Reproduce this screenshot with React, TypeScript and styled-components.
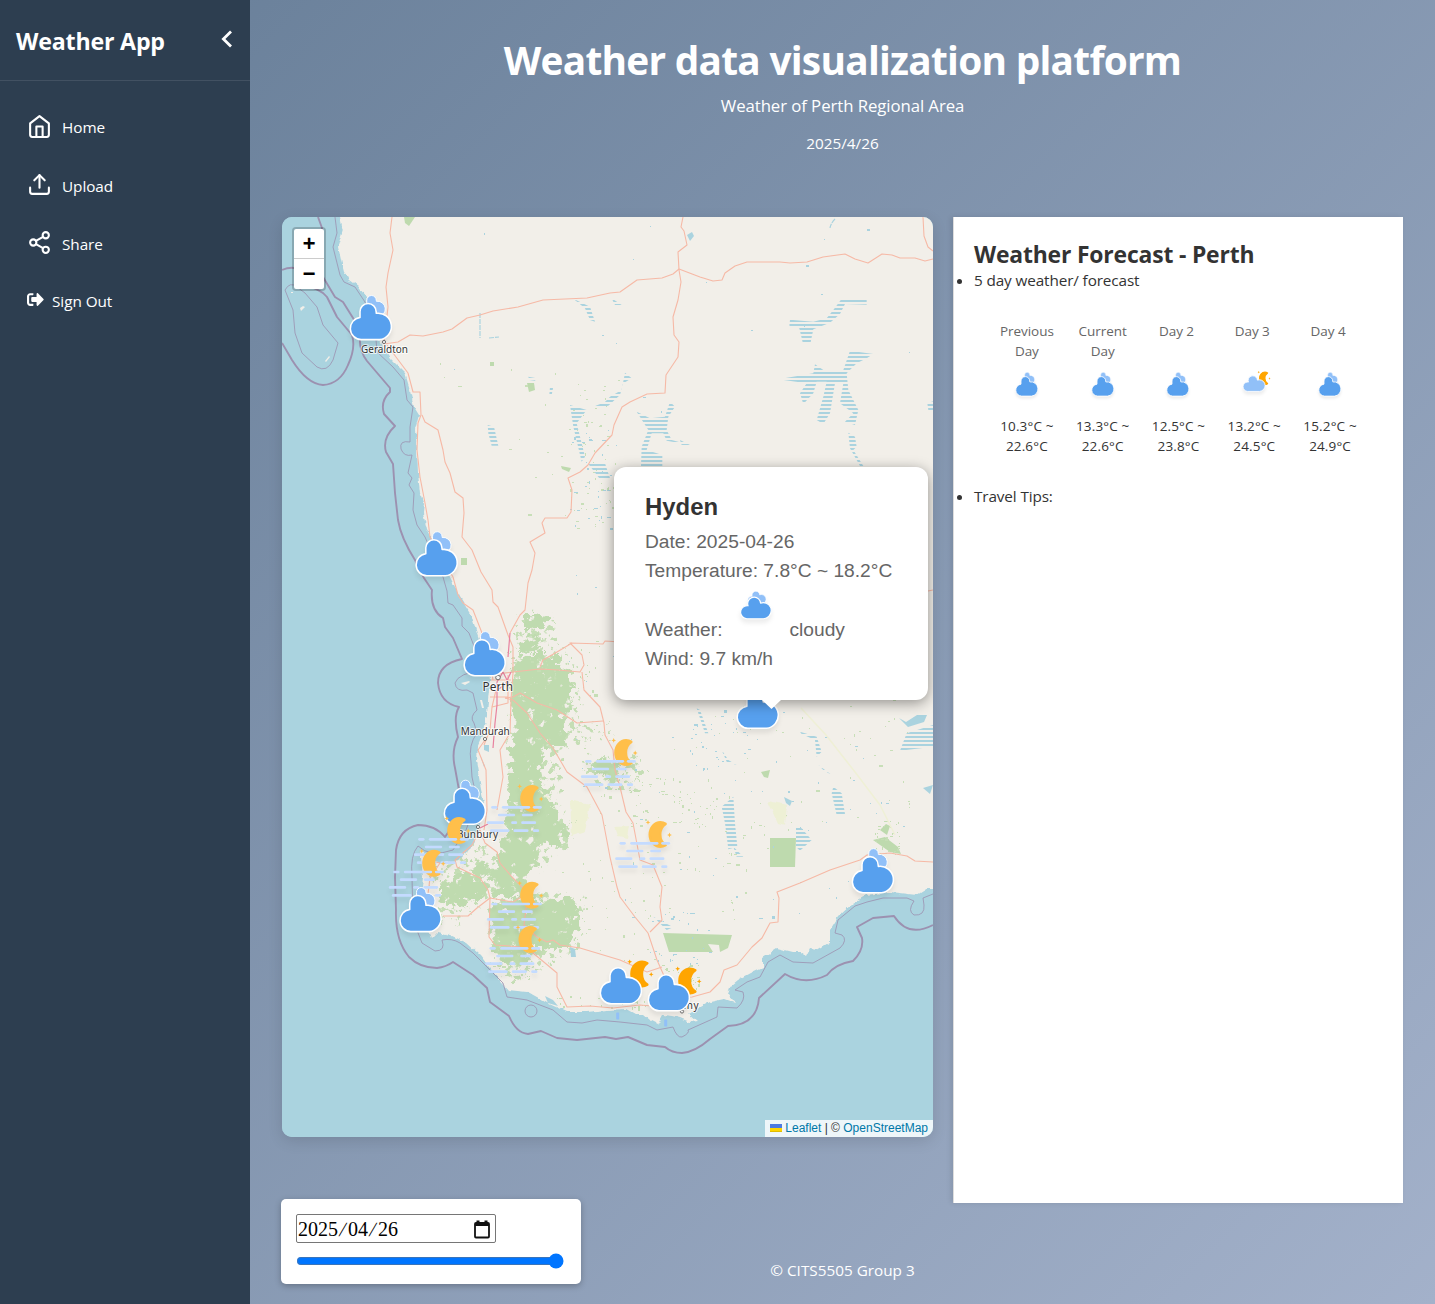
import React from "react";
import styled, { createGlobalStyle } from "styled-components";
import { FiHome, FiShare2, FiUpload } from "react-icons/fi";
import { FaSignOutAlt } from "react-icons/fa";

const uiFont = `"Segoe UI", "Open Sans", "Noto Sans", sans-serif`;
const mapFont = `"Liberation Sans", Arial, sans-serif`;

const GlobalStyle = createGlobalStyle`
  * { box-sizing: border-box; }
  body {
    margin: 0;
    font-family: ${uiFont};
    font-size: 15.3px;
    color: #333;
  }
  h1, h2, h3, p, ul { margin: 0; padding: 0; }
`;

const Page = styled.div`
  display: flex;
  height: 1304px;
  width: 1435px;
  overflow: hidden;
  background: linear-gradient(135deg, #667d97 0%, #a3b1ca 100%);
`;

const Sidebar = styled.aside`
  width: 250px;
  flex: none;
  background: #2d3e50;
  color: #fff;
`;

const SidebarHeader = styled.div`
  display: flex;
  align-items: center;
  justify-content: space-between;
  height: 81px;
  padding: 2px 17px 0 16px;
  border-bottom: 1px solid #425162;
`;

const Brand = styled.h2`
  font-size: 23.2px;
  font-weight: 700;
  line-height: 32px;
  letter-spacing: -0.2px;
  white-space: nowrap;
`;

const CollapseIcon = styled.svg`
  display: block;
  margin-top: -4px;
`;

const Nav = styled.nav`
  display: flex;
  flex-direction: column;
  padding-top: 17px;
`;

const NavItem = styled.a<{ $gap?: number; $height?: number }>`
  display: flex;
  align-items: center;
  gap: ${(p) => p.$gap ?? 10}px;
  height: ${(p) => p.$height ?? 58.4}px;
  padding-left: 27px;
  letter-spacing: -0.05px;
  svg {
    flex: none;
    margin-top: -2px;
  }
`;

const Main = styled.main`
  flex: 1;
  display: flex;
  flex-direction: column;
  padding: 0 32px;
`;

const Header = styled.header`
  display: flex;
  flex-direction: column;
  align-items: center;
  height: 217px;
  padding-top: 32px;
  color: #fff;
`;

const Title = styled.h1`
  font-size: 38.8px;
  font-weight: 700;
  line-height: 56px;
  letter-spacing: -0.73px;
  white-space: nowrap;
`;

const Subtitle = styled.p`
  margin-top: 6px;
  font-size: 16.8px;
  line-height: 24px;
  letter-spacing: -0.08px;
`;

const Today = styled.p`
  margin-top: 13px;
  font-size: 15.3px;
  line-height: 24px;
`;

const Content = styled.section`
  display: flex;
  gap: 20px;
  align-items: flex-start;
`;

const MapFrame = styled.div`
  position: relative;
  width: 651px;
  height: 920px;
  flex: none;
  border-radius: 10px;
  overflow: hidden;
  background: #aad3df;
`;

const MapShadow = styled.div`
  border-radius: 10px;
  box-shadow: 0 4px 15px rgba(0, 0, 0, 0.12);
`;

const MapSvg = styled.svg`
  display: block;
`;

const ZoomControl = styled.div`
  position: absolute;
  top: 10px;
  left: 10px;
  border: 2px solid rgba(0, 0, 0, 0.2);
  border-radius: 4px;
  background-clip: padding-box;
  background-color: #fff;
`;

const ZoomButton = styled.div<{ $divider?: boolean }>`
  width: 30px;
  height: 30px;
  padding-top: ${(p) => (p.$divider ? 5 : 3)}px;
  border-bottom: ${(p) => (p.$divider ? "1px solid #ccc" : "none")};
  display: flex;
  align-items: center;
  justify-content: center;
  color: #000;
  font: bold 22px/30px "Liberation Mono", "Courier New", monospace;
`;

const Attribution = styled.div`
  position: absolute;
  right: 0;
  bottom: 0;
  display: flex;
  align-items: center;
  height: 17px;
  padding: 0 5px;
  background: rgba(255, 255, 255, 0.8);
  color: #333;
  font: 12px/17px ${mapFont};
  white-space: pre;
  a { color: #0078a8; }
`;

const Flag = styled.span`
  width: 12px;
  height: 8px;
  margin: -1px 3px 0 0;
  background: linear-gradient(#4c7be1 50%, #ffd500 50% 87%, #e0bc00 87%);
`;

const Popup = styled.div`
  position: absolute;
  left: 332px;
  top: 250px;
  width: 314px;
  height: 233px;
  padding: 24px 31px;
  border-radius: 12px;
  background: #fff;
  box-shadow: 0 3px 14px rgba(0, 0, 0, 0.4);
  font: 19.2px/29px ${mapFont};
  color: #666;
`;

const PopupTip = styled.div`
  position: absolute;
  left: 148px;
  top: 233px;
  width: 19px;
  height: 9px;
  background: #fff;
  clip-path: polygon(0 0, 100% 0, 50% 100%);
`;

const PopupTitle = styled.h3`
  font-size: 23.9px;
  line-height: 32px;
  margin-bottom: 4px;
  color: #333;
`;

const PopupLine = styled.p`
  height: 29px;
  white-space: nowrap;
`;

const WeatherLine = styled(PopupLine)`
  display: flex;
  align-items: flex-end;
  height: 59px;
`;

const PopupIcon = styled.svg`
  margin: 0 12px 16px 12px;
  width: 43px;
  height: 43px;
`;

const Panel = styled.aside`
  width: 450px;
  height: 986px;
  padding: 22px 20px 0;
  background: #fff;
  border-left: 1px solid #ddd;
  box-shadow: -2px 0 5px rgba(0, 0, 0, 0.1);
`;

const PanelTitle = styled.h2`
  margin-bottom: -1px;
  font-size: 22.9px;
  line-height: 32px;
  white-space: nowrap;
  letter-spacing: -0.17px;
`;

const Bullet = styled.li`
  display: list-item;
  line-height: 21px;
  letter-spacing: -0.12px;
`;

const ForecastGrid = styled.div`
  display: grid;
  grid-template-columns: repeat(5, 75.8px);
  margin: 30px 0 30px 15px;
  text-align: center;
`;

const Day = styled.div`
  display: flex;
  flex-direction: column;
  align-items: center;
  font-size: 13.5px;
  line-height: 20px;
`;

const DayLabel = styled.div<{ $short: boolean }>`
  width: 60px;
  height: 40px;
  padding-right: ${(p) => (p.$short ? 4 : 0)}px;
  letter-spacing: -0.05px;
  color: #666;
`;

const DayIcon = styled.svg`
  margin: 8px 0 7px;
  width: 40px;
  height: 40px;
`;

const DayTemp = styled.div`
  letter-spacing: 0.15px;
  color: #333;
`;

const DateBox = styled.div`
  position: fixed;
  left: 281px;
  bottom: 20px;
  width: 300px;
  height: 85px;
  padding: 15px;
  border-radius: 5px;
  background: #fff;
  box-shadow: 0 2px 6px rgba(0, 0, 0, 0.25);
`;

const DateField = styled.div`
  display: flex;
  align-items: center;
  justify-content: space-between;
  width: 200px;
  height: 29px;
  padding: 1px 5px 0 1px;
  border: 1px solid #767676;
  border-radius: 2px;
  background: #fff;
  color: #000;
  font: 20px/26px "Liberation Serif", "Times New Roman", serif;
`;

const Slash = styled.span`
  display: inline-block;
  width: 10px;
  text-align: center;
  transform: skewX(-14deg);
`;

const Slider = styled.input`
  display: block;
  width: 268px;
  height: 16px;
  margin: 10px 0 0 0.4px;
  accent-color: #0075ff;
`;

const Footer = styled.footer`
  margin-top: 55px;
  text-align: center;
  color: #fff;
  line-height: 24px;
`;

const CLOUD =
  "M47.7,35.4c0-4.6-3.7-8.2-8.2-8.2c-1,0-1.9,0.2-2.8,0.5c-0.3-3.4-3.1-6.2-6.6-6.2c-3.7,0-6.7,3-6.7,6.7c0,0.8,0.2,1.6,0.4,2.3c-0.3-0.1-0.7-0.1-1-0.1c-3.7,0-6.7,3-6.7,6.7c0,3.6,2.9,6.6,6.5,6.7l17.2,0C44.2,43.3,47.7,39.8,47.7,35.4z";
const TALL_CLOUD =
  "M11.2,36A10.9,10.9 0 0 1 10.2,14.3V8.6A7.9,8 0 0 1 26,8.6L26.2,10.2A13,13 0 1 1 29.4,36Z";
const MOON =
  "M14.5,13.2c0-3.7,2-6.9,5-8.7c-1.5-0.9-3.2-1.3-5-1.3c-5.5,0-10,4.5-10,10s4.5,10,10,10c1.8,0,3.5-0.5,5-1.3C16.5,20.2,14.5,16.9,14.5,13.2z";

const shadow = { filter: "drop-shadow(0 4px 2px rgba(0,0,0,0.07))" };

/* Clouds are anchored at the top-left corner of the front cloud. */
function WideCloud({ x, y, s, fill = "#57a0ee", back = true }: {
  x: number; y: number; s: number; fill?: string; back?: boolean;
}) {
  return (
    <g transform={`translate(${x} ${y}) scale(${s}) translate(-15.5 -20.9)`} stroke="#fff" strokeWidth={1.2} strokeLinejoin="round" style={shadow}>
      {back && <path d={CLOUD} fill="#91c0f8" transform="translate(13.8 2.5) scale(.6)" />}
      <path d={CLOUD} fill={fill} />
    </g>
  );
}

function Cloud({ x, y, s = 1.02, back = true }: { x: number; y: number; s?: number; back?: boolean }) {
  return (
    <g transform={`translate(${x} ${y}) scale(${s})`} stroke="#fff" strokeWidth={1.5} strokeLinejoin="round" style={shadow}>
      {back && <path d={TALL_CLOUD} fill="#91c0f8" transform="translate(10.8 -7.6) scale(.59)" />}
      <path d={TALL_CLOUD} fill="#57a0ee" />
    </g>
  );
}

function Star({ x, y, r = 2.4 }: { x: number; y: number; r?: number }) {
  const q = r * 0.3;
  return (
    <path transform={`translate(${x} ${y})`} d={`M0 ${-r}L${q} ${-q}L${r} 0L${q} ${q}L0 ${r}L${-q} ${q}L${-r} 0L${-q} ${-q}Z`} />
  );
}

function Moon({ x, y, color = "#ffa500", s = 1 }: { x: number; y: number; color?: string; s?: number }) {
  return (
    <g transform={`translate(${x} ${y}) scale(${s})`} fill={color}>
      <path transform="scale(1.08 1.23) translate(-3.5 -2.2)" d={MOON} stroke={color} strokeWidth={2} strokeLinejoin="round" />
      <Star x={-0.5} y={1.4} />
      <Star x={21} y={14} />
    </g>
  );
}

const FOG: [number, number, number][] = [
  [22.3, -29, -23.3], [22.3, -18.3, 9.3], [22.3, 12.7, 21],
  [30, -22.3, -5.7], [30, 1.7, 12],
  [37.7, -33.3, -16.7], [37.7, -9, -3.7], [37.7, 1, 15.3],
  [45.7, -30.3, -11.3], [45.7, -6.7, 7.7], [45.7, 12.7, 18.3],
];

function FogMoon({ x, y }: { x: number; y: number }) {
  return (
    <g style={shadow}>
      <Moon x={x - 0.5} y={y} color="#ffbf4a" />
      <g stroke="#c4dbff" strokeWidth={2.7} strokeLinecap="round">
        {FOG.map(([dy, a, b], i) => (
          <line key={i} x1={x + a + 0.8} x2={x + b - 1.2} y1={y + dy} y2={y + dy} />
        ))}
      </g>
    </g>
  );
}

function MoonCloud({ x, y }: { x: number; y: number }) {
  return (
    <g>
      <rect x={x + 16.6} y={y + 45.5} width={3} height={7} fill="#91c0f8" rx={0.8} />
      <Moon x={x + 30.6} y={y - 6.7} />
      <Cloud x={x} y={y} back={false} />
    </g>
  );
}

const COAST =
  "340,217 342.7,230 338,246 341,260 344,272 350,280 358,286 366,297 371,312 376,330 380,342 390,358 405,373 410,390 414,407 419,415 415,430 417,450 418,473 420,493 424,504 423,513 427,530 437,550 450,577 460,597 472,617 478,637 487,660 490,680 488,700 487,717 483,733 477,747 476,760 480,783 484,803 482,818 477,830 472,847 458,860 443,863 430,860 420,848 423,877 421,897 423,917 432,938 438,932 450,935 467,943 480,955 493,972 508,990 527,992 547,1003 567,1012 587,1012 607,1010 627,1009 636,1014 643,1014 650,1020 658,1024 663,1015 672,1016 680,1018 690,1022 697,1021 689,1014 697,1009 710,1002 724,999 735,1003 728,993 731,985 737,980 750,973 763,967 763,957 777,948 793,952 800,952 807,957 811,949 817,950 830,942 830,930 838,917 853,903 867,895 890,892 917,895 928,888 940,888 940,210 340,210";

const BOUNDARY = [
  "M318,217 322,228 Q322,262 323,277 L335,297 343,302 353,318 358,326",
  "M282,270 Q293,265 303,271 M300,284 Q320,288 327,297 L337,317 352,335 Q356,348 348,365 Q340,384 323,385 Q307,384 292,360 L282,343",
  "M360,338 Q359,350 367,361 L390,388 390,392 Q380,401 384,414 L395,426 Q382,438 386,452 L393,464 395,493 398,520 Q401,538 415,560 L424,578 432,590 Q430,610 443,618 L445,627 453,638 462,659 Q438,664 438,683 Q440,703 459,707 Q453,717 458,737 Q451,751 455,768 L459,790 460,815 L445,837 Q435,825 418,825 Q399,829 396,850 L395,877 396,910 Q395,940 409,957 Q420,968 437,968 Q446,967 453,962 L473,975 487,988 490,1002 509,1016 Q516,1033 528,1034 L541,1031 557,1038 577,1040 605,1037 616,1039 628,1037 647,1045 665,1047 Q672,1053 682,1053 Q695,1052 710,1039 L728,1026 Q757,1025 759,998 L785,974 Q805,986 827,975 Q835,964 853,961 Q864,950 862,938 L857,927 873,918 894,916 Q908,938 933,925",
];

const INNER = [
  "M335,217 337,233 333,247 340,275 344,282 355,287 365,302 371,325 376,340 377,352 393,367 404,380 407,400 413,407 410,427 410,442 Q399,440 401,449 Q404,457 412,455 L408,473 412,478 409,485 414,493 413,510 417,525 425,537 433,555 443,577 447,591 448,603 453,605 462,618 462,626 469,633 474,646 484,670 Q458,673 455,683 Q456,692 467,690 L473,693 477,710 Q469,717 474,723 L477,733 Q468,745 471,762 L472,777 477,800 466,830 453,850 Q430,858 418,846 Q410,855 412,877 L413,920 422,943 435,951 Q446,951 442,940 Q452,938 460,943 L473,953 490,970 503,983 507,997 527,1000 553,1010 567,1022 582,1023 597,1020 620,1022 647,1025 657,1030 673,1027 Q677,1038 682,1037 Q690,1033 688,1030 L717,1017 718,1007 737,1008 Q746,1000 743,992 L735,990 747,982 760,977 768,962 780,955 793,962 813,963 840,948 Q848,940 842,935 L835,933 838,920 855,906 867,902 883,898 907,898 914,901 Q907,911 914,915 Q925,916 924,905 L923,898 933,894",
  "M285,290 Q290,281 297,287 L305,293 317,307 323,325 338,343 333,360 Q327,373 317,367 L302,353 295,333 293,310 Z",
  "M525,1011a6,6 0 1 0 12,0a6,6 0 1 0 -12,0",
];

const ROADS = [
  "M392,217 390,233 393,250 388,273 386,287 388,307 384,342",
  "M384,344 398,342 410,335 423,336 443,332 452,329 467,318 480,315 493,311 518,307 543,300 587,298 610,293 620,292 637,280 662,278 673,274 679,269 700,277 713,281 722,280 725,273 735,266 747,262 780,262 790,263 807,262 823,257 845,254 855,259 868,263 882,254 892,255 900,258 915,258 925,261 933,259",
  "M683,217 681,227 684,231 687,245 678,252 679,270 681,282 678,300 673,317 674,335 679,342 678,357 666,375 665,393 647,394 630,402 622,407 614,425 612,435 595,453 588,465 580,472 568,478 572,490 571,512 567,518 545,518 542,523 545,533 530,542 535,553 532,570 528,583 525,610 520,615 510,633",
  "M923,217 924,236 928,247 933,251",
  "M387,345 408,373 413,392 420,392 421,415 418,423 417,450 420,477 425,503 428,520 430,537 441,557 453,577 458,595 463,603 473,610 482,633 489,655 493,680",
  "M422,415 425,422 438,430 443,450 445,462 450,473 455,492 463,498 464,513 462,537 472,550 481,572 492,590 493,602 498,607 508,635 513,647 513,673 511,700 510,733 500,750 503,777 497,810",
  "M497,674 513,672 540,669 558,670 580,672 584,665 582,655 570,643 603,644 605,641 620,642",
  "M540,667 543,660 557,652 572,643 M582,672 584,690 600,707 604,723 605,735 613,750 615,770 620,787 626,812 633,823 640,860 653,865 662,887 660,907 662,920 650,932",
  "M505,698 513,700 527,713 540,733 553,748 567,772 587,787 602,815 610,857 617,887 620,897 635,917 648,933 657,960 665,978 672,998",
  "M505,698 513,697 520,693 537,703 557,710 577,723 603,721",
  "M672,998 692,997 710,992 720,982 724,970 737,965 752,947 762,938 770,923 778,922 779,898 777,892 800,883 830,870 860,860 867,855 890,853 907,856 915,861 933,862",
  "M480,830 472,845 455,860 457,867 480,878 488,890 490,898 489,937 495,945 523,947 533,953 557,973 557,987 567,1007 590,1006 613,1008 640,1005 663,1007",
  "M443,916 468,916 477,908 490,898 513,902 528,893 524,925 537,937 547,942 553,940 560,945 580,948 620,960 647,972 662,967",
  "M480,830 485,843 497,852 500,863 512,877 523,888 M425,860 440,863 430,878 426,910 M485,740 478,750 486,770 487,810 484,830 M496,690 492,707 490,730 484,745",
  "M491,680 511,680 M490,697 508,697 M492,707 508,703 508,675",
  "M928,591 933,590",
];

const MOTORWAYS = "M510,633 508,657 M511,672 505,685 497,690 497,705 495,723 493,748 M503,672 497,682 497,690 M480,828 488,824 M503,672 509,684";

const FORESTS = [
  "525,613 542,613 548,617 542,629 525,629",
  "521,637 536,634 538,652 520,653",
  "514,662 530,655 557,655 557,668 570,673 570,708 557,713 567,730 565,747 543,747 541,767 543,783 552,802 558,818 567,830 563,842 552,846 543,840 540,860 528,877 523,893 507,899 493,890 489,872 497,860 505,830 508,798 509,765 513,700",
  "468,868 480,858 492,872 480,880",
  "441,884 463,873 486,884 489,897 470,899 452,907 441,898",
  "490,903 512,902 530,893 540,905 557,897 576,903 576,928 565,950 540,950 527,940 526,965 508,966 492,947",
  "588,765 606,757 622,764 615,780 596,775",
];
const WOODLANDS = [
  "524,612 552,614 556,645 570,655 580,700 575,740 560,760 560,800 572,830 566,850 540,870 520,800 512,700 512,640",
  "575,725 610,722 608,735 580,745 560,750",
  "428,868 470,845 500,850 520,890 505,905 470,905 460,925 440,920",
  "490,895 540,890 585,900 575,950 545,965 530,975 512,985 492,950",
  "582,760 640,755 640,790 600,790",
];
const PARKS = [
  "663,933 732,935 728,948 720,952 719,945 708,944 713,952 669,952",
  "770,838 796,838 795,867 770,867",
  "873,840 885,837 898,847 901,854 890,852",
  "404,217 415,217 409,226 405,223",
  "527,383 534,383 535,390 529,392",
  "561,466 571,468 569,472 562,469",
  "461,558 467,558 467,565 461,565",
  "490,362 494,362 494,366 490,366",
  "880,830 886,824 890,826 887,835",
  "761,772 770,770 768,778 764,777",
];
const PALE = ["768,801 787,805 785,825 778,823", "570,800 590,805 585,832 572,836", "615,827 630,826 628,838 618,836", "520,795 540,790 550,800 530,803"];

/* Salt lakes are drawn on 3x tiles; each group carries its tile origin. */
const SALT_LAKES: { origin: [number, number]; shapes: string[] }[] = [
  {
    origin: [600, 210],
    shapes: [
      "725,266 800,266 800,284 735,282 720,312 690,338 640,358 632,397 608,397 598,355 568,347 570,329 640,335 680,325 700,300",
      "750,422 820,432 800,445 770,460 740,490 745,540 775,600 765,645 735,635 760,610 720,580 730,520 705,520 690,610 670,642 650,630 670,560 680,515 650,515 640,550 610,582 600,550 620,520 535,508 640,490 645,463 670,480 730,480",
      "110,605 150,625 195,620 210,575 225,590 205,620 200,660 215,690 270,705 200,692 190,670 155,670 140,720 187,735 187,768 123,768 125,710 145,660",
      "75,488 95,505 70,520 60,555 25,587 0,592 30,560 65,540",
      "745,668 765,680 770,710 760,720 790,768 780,768 750,715",
      "982,580 999,574 999,606 985,600",
      "240,690 270,705 245,705",
      "35,265 65,285 45,285",
    ],
  },
  {
    origin: [280, 210],
    shapes: [
      "870,585 920,600 890,640 915,740 905,755 880,650",
      "623,645 642,650 655,707 635,707 625,670",
      "925,762 975,760 990,805 960,808 935,775",
      "880,266 930,290 945,335 930,330 915,295",
      "940,590 990,570 990,580 960,594",
      "810,530 820,530 815,555 808,555",
      "745,500 770,505 765,512 748,510",
    ],
  },
  {
    origin: [600, 690],
    shapes: [
      "365,350 400,320 405,400 412,470 385,478 375,400",
      "588,410 605,415 635,450 600,482 588,470",
      "700,290 725,310 735,372 710,375 695,310",
      "920,130 999,105 999,170 900,182",
      "600,125 650,140 665,185 650,200 645,150 605,132",
      "365,180 385,210 410,225 380,215",
      "655,225 695,255 670,240",
      "400,470 430,500 410,500",
      "160,680 220,712 200,720",
      "290,55 300,60 325,130 315,130",
    ],
  },
];
const LAKES = [
  "899,718 906,722 917,715 927,715 924,722 908,727", "923,788 933,785 930,794", "687,235 692,232 694,236 690,241",
  "570,947 575,949 576,957 571,957", "545,996 553,1000 558,1006 548,1003", "784,797 792,801 790,806 786,803", "484,745 489,745 489,752 484,750", "480,755 485,766 484,767",
];

type Speck = { x: number; y: number; w: number; h: number; c: string };
const AREAS: [number, number, number, number, number, string][] = [
  [530, 640, 70, 110, 60, "#c5deb5"],
  [600, 770, 120, 60, 70, "#c8dfb8"],
  [640, 800, 130, 120, 45, "#c8dfb8"],
  [570, 380, 50, 150, 70, "#c8dfb8"],
  [440, 360, 130, 160, 16, "#c8dfb8"],
  [560, 860, 100, 110, 35, "#c8dfb8"],
  [550, 995, 120, 15, 40, "#c5deb5"],
  [490, 940, 40, 40, 40, "#c8dfb8"],
  [670, 700, 260, 140, 60, "#c8dfb8"],
  [870, 820, 30, 35, 40, "#c5deb5"],
  [660, 965, 40, 25, 30, "#c5deb5"],
  [690, 710, 60, 60, 30, "#aad3df"],
  [570, 430, 50, 90, 30, "#aad3df"],
  [560, 500, 360, 300, 40, "#aad3df"],
  [450, 225, 470, 200, 16, "#aad3df"],
  [610, 730, 300, 200, 55, "#aad3df"],
  [650, 910, 60, 60, 30, "#aad3df"],
];

function buildSpecks(): Speck[] {
  let seed = 7;
  const next = () => {
    seed = (seed * 1103515245 + 12345) % 2147483648;
    return seed / 2147483648;
  };
  return AREAS.flatMap(([x, y, w, h, n, c]) =>
    Array.from({ length: n }, () => ({
      x: x + Math.floor(next() * w),
      y: y + Math.floor(next() * h),
      w: 1 + Math.floor(next() * next() * 4),
      h: 1 + Math.floor(next() * next() * 3),
      c,
    })),
  );
}
const SPECKS = buildSpecks();

function Terrain() {
  return (
    <MapSvg width={651} height={920} viewBox="282 217 651 920">
      <defs>
        <pattern id="salt" width="12" height="12" patternUnits="userSpaceOnUse">
          <rect y="6" width="12" height="6" fill="#aad3df" />
        </pattern>
        <filter id="dense" x="-5%" y="-5%" width="110%" height="110%" colorInterpolationFilters="sRGB">
          <feTurbulence type="fractalNoise" baseFrequency="0.11" numOctaves="4" seed="4" result="noise" />
          <feDisplacementMap in="SourceGraphic" in2="noise" scale="20" xChannelSelector="R" yChannelSelector="G" result="shape" />
          <feColorMatrix in="noise" type="matrix" values="0 0 0 0 0  0 0 0 0 0  0 0 0 0 0  0 0 0 12 -3.1" result="mask" />
          <feComposite in="shape" in2="mask" operator="in" />
        </filter>
        <filter id="sparse" x="-5%" y="-5%" width="110%" height="110%" colorInterpolationFilters="sRGB">
          <feTurbulence type="fractalNoise" baseFrequency="0.16" numOctaves="4" seed="11" result="noise" />
          <feDisplacementMap in="SourceGraphic" in2="noise" scale="24" xChannelSelector="R" yChannelSelector="G" result="shape" />
          <feColorMatrix in="noise" type="matrix" values="0 0 0 0 0  0 0 0 0 0  0 0 0 0 0  0 0 0 14 -7.7" result="mask" />
          <feComposite in="shape" in2="mask" operator="in" />
        </filter>
        <filter id="rough" x="-5%" y="-5%" width="110%" height="110%" colorInterpolationFilters="sRGB">
          <feTurbulence type="fractalNoise" baseFrequency="0.15" numOctaves="2" seed="9" result="noise" />
          <feDisplacementMap in="SourceGraphic" in2="noise" scale="5" xChannelSelector="R" yChannelSelector="G" />
        </filter>
        <clipPath id="land"><polygon points={COAST} /></clipPath>
      </defs>
      <rect x="282" y="217" width="651" height="920" fill="#aad3df" />
      <polygon points={COAST} fill="#f2efe9" filter="url(#rough)" />
      <path
        fill="#f2efe9"
        d="M300,308l3,-2 2,1-4,4zM291,292h2v1h-2zM325,361l4,-5 1,1-4,5zM461,683l8,-2 1,1-5,3zM480,700l2,0 2,8-2,0zM485,717l2,1 0,5-2,0z"
      />
      <g clipPath="url(#land)">
        {PALE.map((p) => <polygon key={p} points={p} fill="#eef0d5" filter="url(#rough)" />)}
        <g fill="#c5deb5" filter="url(#sparse)">
          {WOODLANDS.map((p) => <polygon key={p} points={p} />)}
        </g>
        <g fill="#bfdbaf" filter="url(#dense)">
          {FORESTS.map((p) => <polygon key={p} points={p} />)}
        </g>
        <g fill="#bedaae">{PARKS.map((p) => <polygon key={p} points={p} />)}</g>
        {SPECKS.map((s, i) => <rect key={i} x={s.x} y={s.y} width={s.w} height={s.h} fill={s.c} />)}
        {SALT_LAKES.map(({ origin, shapes }) => (
          <g key={origin.join()} transform={`translate(${origin[0]} ${origin[1]}) scale(.33333)`} fill="url(#salt)">
            {shapes.map((p) => <polygon key={p} points={p} />)}
          </g>
        ))}
        <g fill="#aad3df">{LAKES.map((p) => <polygon key={p} points={p} />)}</g>
        <path d="M835,219Q831,223 830,228M480,313L480,338M489,338l10,-1" stroke="#aad3df" strokeWidth="1.2" strokeDasharray="5 1" fill="none" />
        <path d="M801,708 826,735 855,772 880,805 895,835" stroke="#eff0d6" strokeWidth="1.5" fill="none" />
      </g>
      <g fill="none" stroke="#9c91b0" strokeLinejoin="round">
        {INNER.map((d) => <path key={d} d={d} strokeWidth={0.8} />)}
        {BOUNDARY.map((d) => <path key={d} d={d} strokeWidth={1.9} />)}
      </g>
      <g fill="none" stroke="#f6b9a6" strokeWidth={1.1} strokeLinejoin="round">
        {ROADS.map((d) => <path key={d} d={d} />)}
        <path d={MOTORWAYS} stroke="#e8829f" strokeWidth={1.2} />
      </g>
      <g fill="#fff" stroke="#666" strokeWidth={0.9}>
        <circle cx="384" cy="342" r="1.6" />
        <circle cx="498" cy="677.5" r="2.3" />
        <circle cx="485" cy="739" r="1.6" />
        <circle cx="478" cy="827" r="1.6" />
        <circle cx="682" cy="1011.5" r="1.6" />
      </g>
      <g fontFamily='"Noto Sans", sans-serif' fontSize={10} fill="#333" stroke="#fff" strokeOpacity={0.75} strokeWidth={2} paintOrder="stroke" strokeLinejoin="round">
        <text x="361" y="353" textLength="47">Geraldton</text>
        <text x="482.5" y="691" fontSize={11.8} textLength="30.5">Perth</text>
        <text x="460.7" y="735" textLength="49">Mandurah</text>
        <text x="457" y="837.5" textLength="41">Bunbury</text>
        <text x="664" y="1009" textLength="34.5">Albany</text>
      </g>
      <Cloud x={349.6} y={302.9} />
      <Cloud x={415.4} y={539.1} />
      <Cloud x={463.4} y={639} />
      <Cloud x={736.5} y={691.6} />
      <FogMoon x={614.7} y={739} />
      <FogMoon x={520.7} y={785} />
      <Cloud x={443.6} y={787.6} />
      <FogMoon x={649} y={821} />
      <FogMoon x={447.7} y={817} />
      <FogMoon x={422.7} y={849.7} />
      <Cloud x={851.6} y={856} />
      <Cloud x={399.3} y={894.9} />
      <FogMoon x={520.7} y={881.7} />
      <FogMoon x={519} y={926} />
      <MoonCloud x={599.6} y={967.1} />
      <MoonCloud x={647.6} y={974.1} />
    </MapSvg>
  );
}

const DAYS = [
  { label: "Previous Day", low: "10.3", high: "22.6" },
  { label: "Current Day", low: "13.3", high: "22.6" },
  { label: "Day 2", low: "12.5", high: "23.8" },
  { label: "Day 3", low: "13.2", high: "24.5", night: true },
  { label: "Day 4", low: "15.2", high: "24.9" },
];

export default function App() {
  return (
    <>
      <GlobalStyle />
      <Page>
        <Sidebar>
          <SidebarHeader>
            <Brand>Weather App</Brand>
            <CollapseIcon width="12" height="18" viewBox="0 0 12 18" fill="none" stroke="#fff" strokeWidth="2.8">
              <path d="M10 1.5L2.4 9L10 16.5" />
            </CollapseIcon>
          </SidebarHeader>
          <Nav>
            <NavItem><FiHome size={25} />Home</NavItem>
            <NavItem><FiUpload size={25} />Upload</NavItem>
            <NavItem><FiShare2 size={25} />Share</NavItem>
            <NavItem $gap={8} $height={55.4}><FaSignOutAlt size={17} />Sign Out</NavItem>
          </Nav>
        </Sidebar>
        <Main>
          <Header>
            <Title>Weather data visualization platform</Title>
            <Subtitle>Weather of Perth Regional Area</Subtitle>
            <Today>2025/4/26</Today>
          </Header>
          <Content>
            <MapShadow>
              <MapFrame>
                <Terrain />
                <ZoomControl>
                  <ZoomButton $divider>+</ZoomButton>
                  <ZoomButton>−</ZoomButton>
                </ZoomControl>
                <Attribution>
                  <Flag />
                  <a>Leaflet</a> | © <a>OpenStreetMap</a>
                </Attribution>
                <Popup>
                  <PopupTitle>Hyden</PopupTitle>
                  <PopupLine>Date: 2025-04-26</PopupLine>
                  <PopupLine>Temperature: 7.8°C ~ 18.2°C</PopupLine>
                  <WeatherLine>
                    Weather:
                    <PopupIcon viewBox="0 0 43 43">
                      <WideCloud x={5} y={11.5} s={0.97} />
                    </PopupIcon>
                    cloudy
                  </WeatherLine>
                  <PopupLine>Wind: 9.7 km/h</PopupLine>
                  <PopupTip />
                </Popup>
              </MapFrame>
            </MapShadow>
            <Panel>
              <PanelTitle>Weather Forecast - Perth</PanelTitle>
              <ul>
                <Bullet>5 day weather/ forecast</Bullet>
                <ForecastGrid>
                  {DAYS.map((d) => (
                    <Day key={d.label}>
                      <DayLabel $short={d.label.length < 6}>{d.label}</DayLabel>
                      <DayIcon viewBox="0 0 40 40">
                        {d.night ? (
                          <>
                            <Moon x={25} y={2.5} s={0.5} />
                            <WideCloud x={8.6} y={6.4} s={0.7} fill="#91c0f8" back={false} />
                          </>
                        ) : (
                          <Cloud x={8.4} y={7.3} s={0.55} />
                        )}
                      </DayIcon>
                      <DayTemp>{d.low}°C ~<br />{d.high}°C</DayTemp>
                    </Day>
                  ))}
                </ForecastGrid>
                <Bullet>Travel Tips:</Bullet>
              </ul>
            </Panel>
          </Content>
          <Footer>© CITS5505 Group 3</Footer>
        </Main>
        <DateBox>
          <DateField>
            <span>2025<Slash>/</Slash>04<Slash>/</Slash>26</span>
            <svg width="16" height="19" viewBox="0 0 16 19" fill="none" stroke="#111" strokeWidth="1.8">
              <rect x="1" y="3" width="14" height="14.5" rx="1" />
              <path d="M1 4.5h14M4 0.5v3M12 0.5v3" strokeWidth="3" />
            </svg>
          </DateField>
          <Slider type="range" min={0} max={100} defaultValue={100} />
        </DateBox>
      </Page>
    </>
  );
}
